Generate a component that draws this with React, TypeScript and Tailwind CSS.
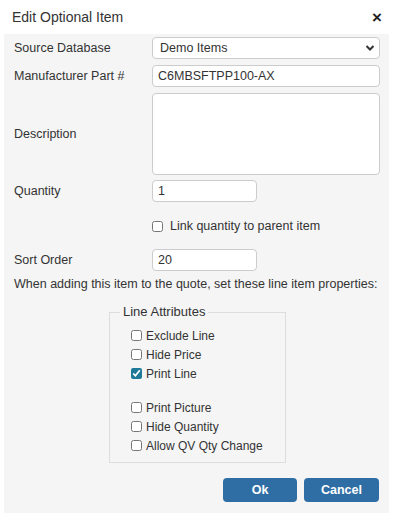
export default function App() {
  const font = { fontFamily: '"Liberation Sans", Arial, sans-serif' };
  const input =
    "h-[22px] rounded-[4px] border border-[#cccccc] bg-white px-[5px] text-[12.5px] text-[#333333] outline-none";

  return (
    <div style={font} className="w-[396px] h-[523px] bg-white text-[#333333]">
      <div className="flex items-center justify-between h-[34px] pl-[12px] pr-[14px]">
        <h1 className="text-[14px] text-[#333333]">Edit Optional Item</h1>
        <span className="text-[17px] font-bold leading-none text-[#222222]">×</span>
      </div>

      <div className="ml-[4px] w-[385px] h-[479px] bg-[#f5f5f5] pl-[10px] pr-[9px] pt-[3px] text-[12.5px]">
        <div className="flex items-center h-[22px]">
          <label className="w-[138px]">Source Database</label>
          <div className="relative w-[228px]">
            <select className={`${input} w-full appearance-none pl-[7px]`} defaultValue="demo">
              <option value="demo">Demo Items</option>
            </select>
            <svg
              className="pointer-events-none absolute right-[5px] top-[7px]"
              width="10"
              height="8"
              viewBox="0 0 10 8"
            >
              <path d="M1.5 2 L5 5.5 L8.5 2" fill="none" stroke="#333" strokeWidth="2" />
            </svg>
          </div>
        </div>

        <div className="flex items-center h-[22px] mt-[6px]">
          <label className="w-[138px]">Manufacturer Part #</label>
          <input className={`${input} w-[228px]`} defaultValue="C6MBSFTPP100-AX" />
        </div>

        <div className="flex items-center h-[82px] mt-[6px]">
          <label className="w-[138px]">Description</label>
          <textarea className={`${input} w-[228px] h-[82px] resize-none`} />
        </div>

        <div className="flex items-center h-[22px] mt-[5px]">
          <label className="w-[138px]">Quantity</label>
          <input className={`${input} w-[105px]`} defaultValue="1" />
        </div>

        <div className="flex items-center h-[22px] mt-[13px] pl-[138px]">
          <input type="checkbox" className="w-[11px] h-[11px] m-0 accent-[#1f7a99]" />
          <span className="ml-[7px] text-[12.5px]">Link quantity to parent item</span>
        </div>

        <div className="flex items-center h-[22px] mt-[12px]">
          <label className="w-[138px]">Sort Order</label>
          <input className={`${input} w-[105px]`} defaultValue="20" />
        </div>

        <p className="mt-[4px] leading-[18px]">
          When adding this item to the quote, set these line item properties:
        </p>

        <fieldset className="ml-[95px] mt-[11px] w-[177px] h-[159px] border border-[#dddddd] pl-[21px] pt-0">
          <legend className="px-[3px] ml-[-11px] text-[13px] leading-[16px]">Line Attributes</legend>
          <div className="mt-[6px] flex flex-col text-[12px]">
            {["Exclude Line", "Hide Price", "Print Line"].map((t) => (
              <label key={t} className="flex items-center h-[19px]">
                <input
                  type="checkbox"
                  defaultChecked={t === "Print Line"}
                  className="w-[11px] h-[11px] m-0 accent-[#1f7a99]"
                />
                <span className="ml-[4px]">{t}</span>
              </label>
            ))}
            <div className="h-[15px]" />
            {["Print Picture", "Hide Quantity", "Allow QV Qty Change"].map((t) => (
              <label key={t} className="flex items-center h-[19px]">
                <input type="checkbox" className="w-[11px] h-[11px] m-0 accent-[#1f7a99]" />
                <span className="ml-[4px]">{t}</span>
              </label>
            ))}
          </div>
        </fieldset>

        <div className="flex justify-end gap-[7px] mt-[15px] pr-[1px]">
          <button className="w-[74px] h-[24px] rounded-[4px] bg-[#2f6ea5] text-white font-bold text-[12.5px]">
            Ok
          </button>
          <button className="w-[75px] h-[24px] rounded-[4px] bg-[#2f6ea5] text-white font-bold text-[12.5px]">
            Cancel
          </button>
        </div>
      </div>
    </div>
  );
}
